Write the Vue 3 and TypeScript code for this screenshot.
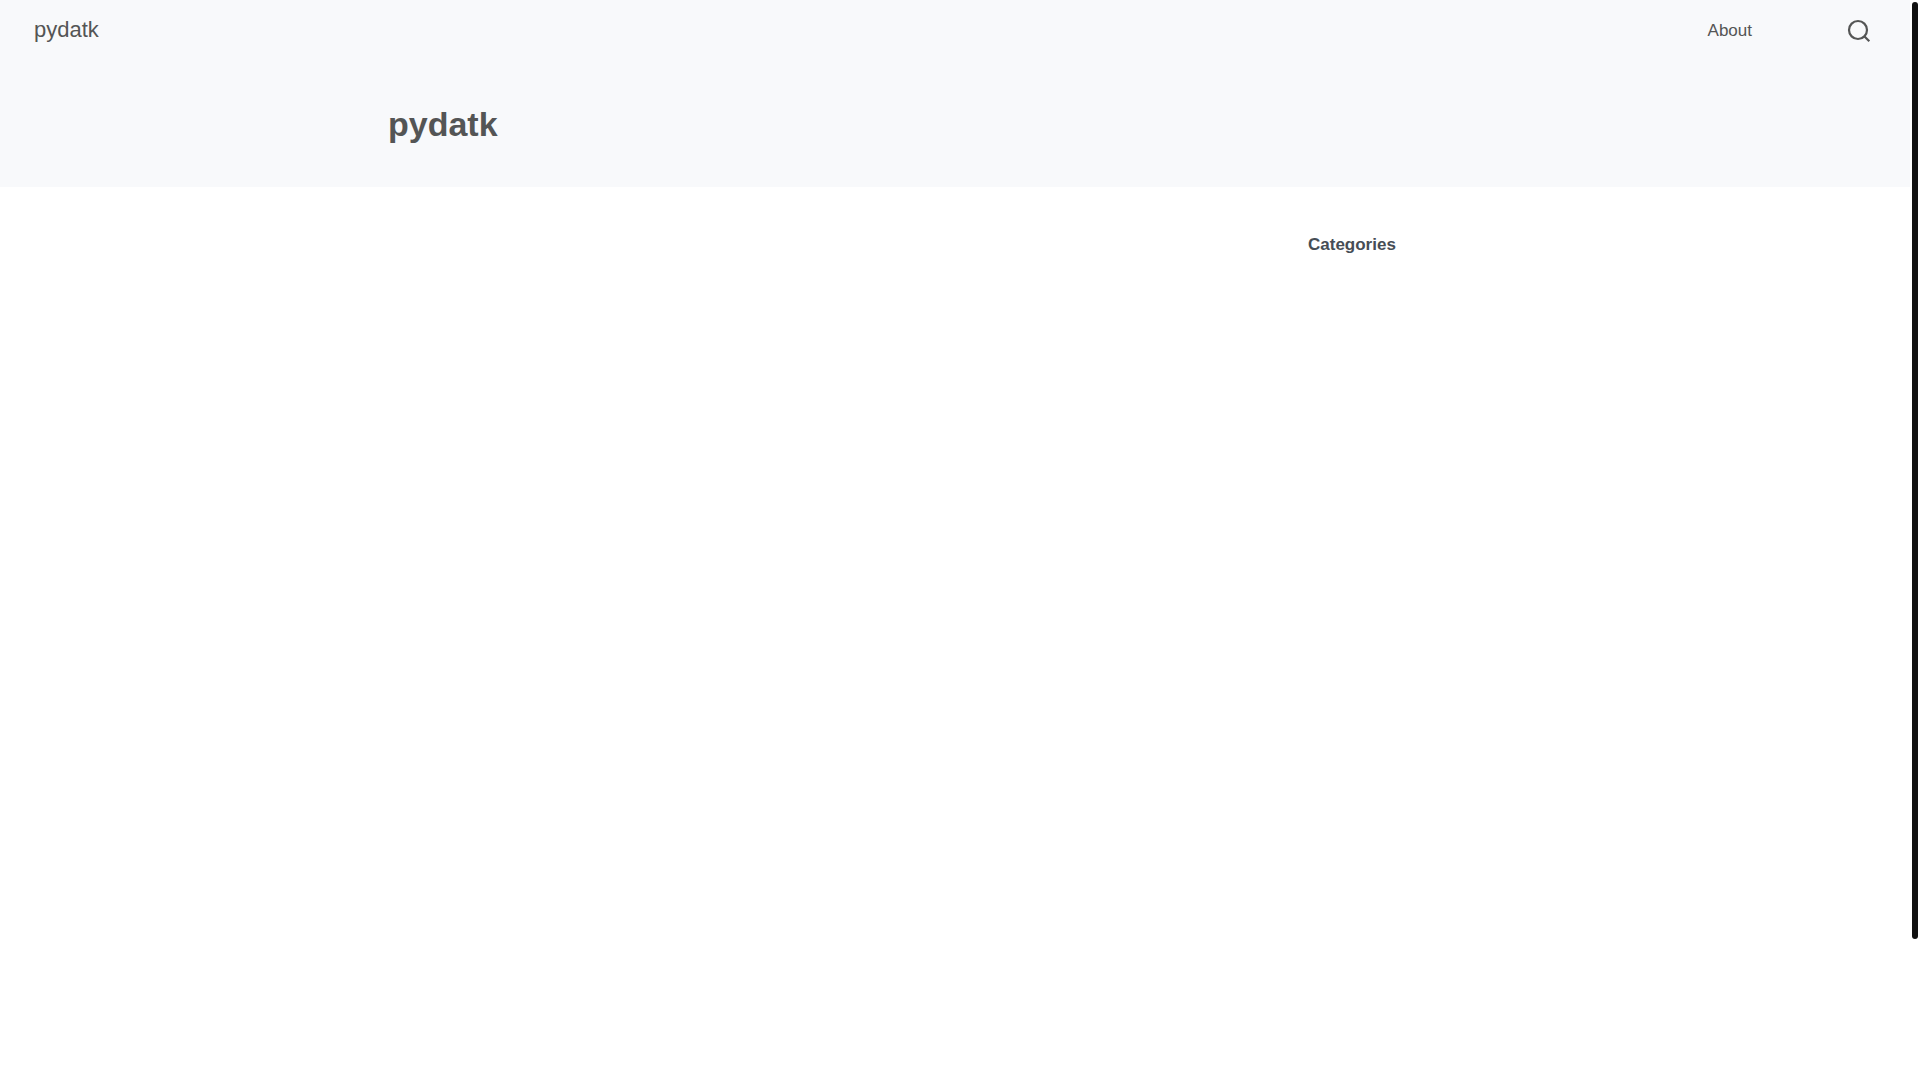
<script setup lang="ts">
const siteTitle: string = 'pydatk'
const navLinks: { label: string; href: string }[] = [{ label: 'About', href: '#about' }]
</script>

<template>
  <div class="page">
    <header class="top">
      <nav class="navbar" aria-label="Main">
        <a class="brand" href="#">{{ siteTitle }}</a>
        <div class="tools">
          <a v-for="link in navLinks" :key="link.href" class="nav-link" :href="link.href">{{ link.label }}</a>
          <button class="search" type="button" aria-label="Search">
            <svg viewBox="0 0 24 24" width="24" height="24" fill="none" stroke="currentColor" stroke-width="2.2">
              <circle cx="11" cy="11" r="9" />
              <path d="M17 17 22.3 22.3" />
            </svg>
          </button>
        </div>
      </nav>
      <div class="banner">
        <h1>{{ siteTitle }}</h1>
      </div>
    </header>
    <main class="content">
      <div class="posts"></div>
      <aside class="margin">
        <h2>Categories</h2>
      </aside>
    </main>
    <div class="scroll-thumb" aria-hidden="true"></div>
  </div>
</template>

<style>
body {
  margin: 0;
  background: #fff;
}
</style>

<style scoped>
.page {
  min-height: 100vh;
  box-sizing: border-box;
  padding-right: 10px;
  font-family: "Liberation Sans", Arial, sans-serif;
  font-size: 17px;
  color: #545555;
}
.top {
  background: #f8f9fb;
}
.navbar {
  display: flex;
  align-items: center;
  justify-content: space-between;
  height: 60px;
  padding: 0 39px 0 34px;
}
.brand {
  font-size: 22px;
  color: inherit;
  text-decoration: none;
}
.tools {
  display: flex;
  align-items: center;
  gap: 95px;
  padding-top: 2px;
}
.nav-link {
  color: inherit;
  text-decoration: none;
}
.search {
  display: flex;
  padding: 0;
  border: 0;
  background: none;
  color: inherit;
  cursor: pointer;
}
.banner {
  display: grid;
  grid-template-columns: minmax(0, 1134px);
  justify-content: center;
  padding: 45px 0 43px;
}
h1 {
  margin: 0;
  font-size: 34px;
  line-height: 39px;
  font-weight: 700;
}
.content {
  display: grid;
  grid-template-columns: minmax(0, 872px) 214px;
  column-gap: 48px;
  justify-content: center;
  padding-top: 48px;
}
h2 {
  margin: 0;
  font-size: 17px;
  line-height: 20px;
  font-weight: 700;
  color: #464d55;
}
.scroll-thumb {
  position: fixed;
  top: 2px;
  right: 2px;
  width: 6px;
  height: calc(87vh - 3px);
  border-radius: 3px;
  background: #111;
}
</style>
